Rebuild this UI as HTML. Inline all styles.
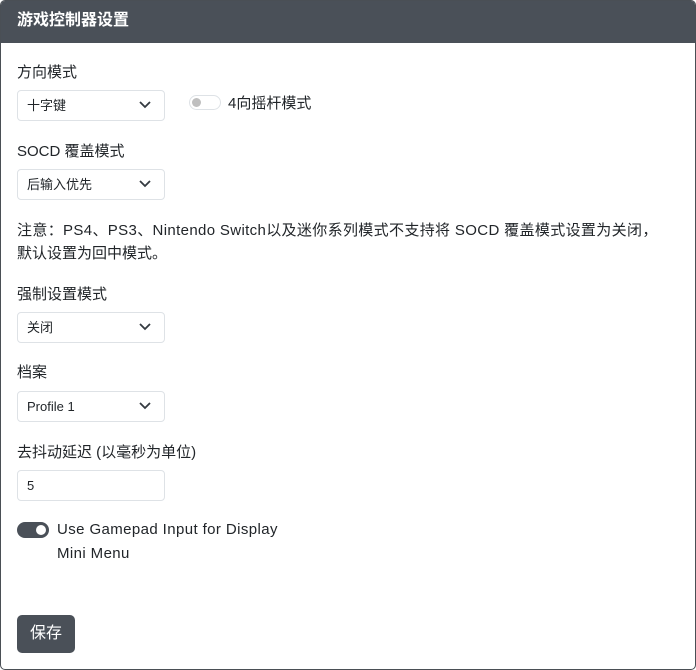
<!DOCTYPE html>
<html><head><meta charset="utf-8"><style>
*{box-sizing:border-box;margin:0;padding:0}
body{width:696px;height:670px;background:#fff;font-family:"Liberation Sans","Noto Sans CJK SC",sans-serif;color:#212529;position:relative;overflow:hidden}
.card{position:absolute;left:0;top:0;width:696px;height:670px;border:1px solid #4a4f55;border-radius:5px;overflow:hidden}
.in{position:absolute;left:-1px;top:-1px;width:696px;height:670px}
.hd{position:absolute;left:0;top:0;width:100%;height:43px;background:#4a5058;color:#fff;font-weight:bold;font-size:16px;line-height:42px;padding-left:17px}
.a{position:absolute;white-space:nowrap}
.lbl{font-size:15px}
.sel{position:absolute;left:17px;width:148px;height:31px;border:1px solid #dee2e6;border-radius:4px;font-size:13px;line-height:29px;padding-left:9px}
.sel svg{position:absolute;right:13px;top:10px}
.btn{position:absolute;left:17px;top:615px;width:58px;height:38px;background:#4a5058;border-radius:5px;color:#fff;font-size:16px;line-height:38px;text-align:center}
</style></head><body><div class="card"><div class="in">
<div class="hd">游戏控制器设置</div>
<div class="a lbl" style="left:17px;top:61px">方向模式</div>
<div class="sel" style="top:90px">十字键<svg width="12" height="8" viewBox="0 0 12 8"><path d="M1 1l5 5 5-5" fill="none" stroke="#343a40" stroke-width="1.8"/></svg></div>
<div class="a" style="left:189px;top:95px;width:32px;height:15px;border:1px solid #dee2e6;border-radius:8px"><div style="position:absolute;left:2px;top:2px;width:9px;height:9px;border-radius:50%;background:#bfbfbf"></div></div>
<div class="a lbl" style="left:228px;top:92px">4向摇杆模式</div>
<div class="a lbl" style="left:17px;top:140px">SOCD 覆盖模式</div>
<div class="sel" style="top:169px">后输入优先<svg width="12" height="8" viewBox="0 0 12 8"><path d="M1 1l5 5 5-5" fill="none" stroke="#343a40" stroke-width="1.8"/></svg></div>
<div class="a lbl" style="left:17px;top:219px;letter-spacing:0.35px">注意：PS4、PS3、Nintendo Switch以及迷你系列模式不支持将 SOCD 覆盖模式设置为关闭，</div>
<div class="a lbl" style="left:17px;top:242px">默认设置为回中模式。</div>
<div class="a lbl" style="left:17px;top:283px">强制设置模式</div>
<div class="sel" style="top:312px">关闭<svg width="12" height="8" viewBox="0 0 12 8"><path d="M1 1l5 5 5-5" fill="none" stroke="#343a40" stroke-width="1.8"/></svg></div>
<div class="a lbl" style="left:17px;top:361px">档案</div>
<div class="sel" style="top:391px">Profile 1<svg width="12" height="8" viewBox="0 0 12 8"><path d="M1 1l5 5 5-5" fill="none" stroke="#343a40" stroke-width="1.8"/></svg></div>
<div class="a lbl" style="left:17px;top:441px">去抖动延迟 (以毫秒为单位)</div>
<div class="sel" style="top:470px">5</div>
<div class="a" style="left:17px;top:522px;width:32px;height:16px;border-radius:8px;background:#4a5058"><div style="position:absolute;right:3px;top:3px;width:10px;height:10px;border-radius:50%;background:#fff"></div></div>
<div class="a lbl" style="left:57px;top:521px;letter-spacing:0.4px">Use Gamepad Input for Display</div>
<div class="a lbl" style="left:57px;top:545px;letter-spacing:0.4px">Mini Menu</div>
<div class="btn">保存</div>
</div></div></body></html>
